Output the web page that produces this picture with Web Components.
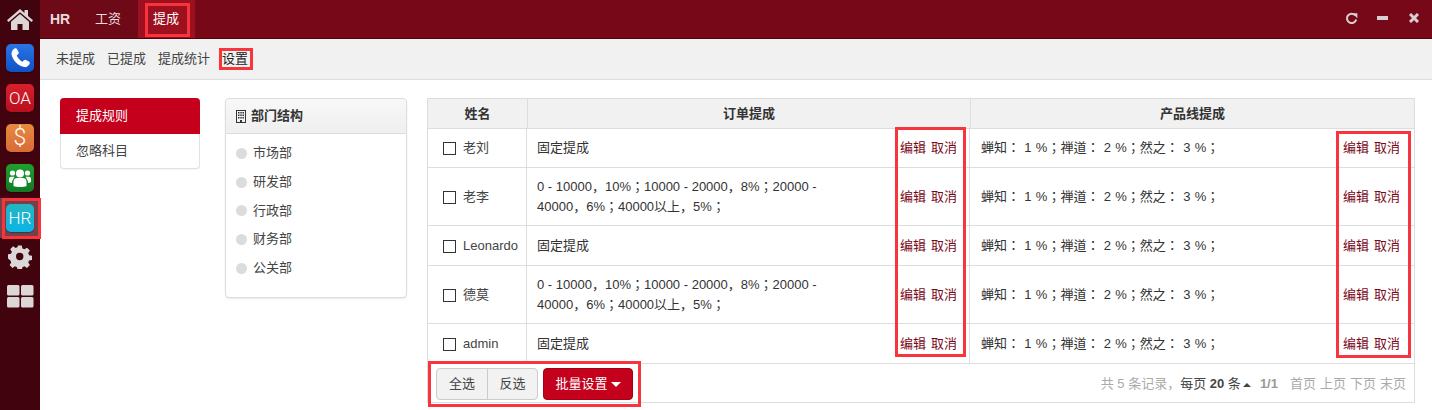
<!DOCTYPE html>
<html lang="zh-CN"><head><meta charset="utf-8"><title>HR</title>
<style>
html,body{margin:0;padding:0;height:410px;overflow:hidden;background:#fff}
body{font:13px/20px "Liberation Sans","Noto Sans CJK SC",sans-serif;color:#333;position:relative}
</style></head><body>
<x-app>
  <x-rail slot="rail"></x-rail>
  <x-topbar slot="top"></x-topbar>
  <x-subnav slot="sub"></x-subnav>
  <x-side-menu slot="main"></x-side-menu>
  <x-dept-panel slot="main"></x-dept-panel>
  <x-rule-table slot="main"></x-rule-table>
</x-app>
<x-mark style="left:145px;top:3px;width:45px;height:34px"></x-mark>
<x-mark style="left:219px;top:48px;width:34px;height:22px"></x-mark>
<x-mark style="left:2px;top:198px;width:39px;height:41px"></x-mark>
<x-mark style="left:895px;top:127px;width:71px;height:230px"></x-mark>
<x-mark style="left:1336px;top:131px;width:75px;height:227px"></x-mark>
<x-mark style="left:428px;top:361px;width:213px;height:46px"></x-mark>
<script>
const TC='"Liberation Sans","Noto Sans CJK KR",sans-serif';
const el=(name,css,html)=>customElements.define(name,class extends HTMLElement{
  constructor(){super();this.attachShadow({mode:'open'}).innerHTML='<style>'+css+'</style>'+html;}
});
el('x-app',`
  :host{display:grid;grid-template-columns:40px 1fr;grid-template-rows:39px 41px 1fr;width:1432px;height:410px}
  .rail{grid-row:1/4;display:flex}
  .top,.sub{display:flex;min-width:0}
  .main{display:flex;align-items:flex-start;padding:18px 17px 0 20px;gap:25px}
  ::slotted(x-rule-table){margin-left:-5px}
`,`<div class="rail"><slot name="rail"></slot></div><div class="top"><slot name="top"></slot></div><div class="sub"><slot name="sub"></slot></div><div class="main"><slot name="main"></slot></div>`);

const tile=(bg,inner)=>`<span class="tile" style="background:${bg}">${inner}</span>`;
el('x-rail',`
  :host{display:flex;flex-direction:column;align-items:center;width:40px;background:#41040f;color:#d9d2d4}
  .it{width:40px;height:40px;display:flex;align-items:center;justify-content:center;flex:none}
  .home{height:38px}
  .on{background:#74404c}
  .tile{width:28px;height:28px;border-radius:5px;display:flex;align-items:center;justify-content:center;color:#fff;font:300 17px/28px Roboto,"Liberation Sans",sans-serif;box-shadow:0 1px 1px rgba(0,0,0,.3)}
  svg{display:block}
`,`
  <div class="it home"><svg width="28" height="24" viewBox="0 0 28 24"><path fill="#ddd6d6" d="M14 2 1 13.2l1.5 1.8L14 5.2 25.500 15l1.500-1.800L22 8.900V3h-3.500v2.900z"/><path fill="#ddd6d6" d="M14 7 5 14.700V23h6.500v-6h5v6H23v-8.300z"/></svg></div>
  <div class="it">${tile('linear-gradient(#2a74e6,#0f52c4)','<svg width="22" height="22" viewBox="0 0 22 22"><path fill="#fff" d="M5.500 1.500c1-.6 2-.3 2.500.6l1.500 3c.4.800.2 1.600-.5 2.200L7.700 8.500c.8 2.300 3.500 5.300 5.800 6.200l1.300-1.400c.6-.6 1.400-.8 2.200-.4l2.900 1.600c.9.500 1.100 1.600.6 2.500-1.100 2-3 3.400-5 3.100C9.500 19.500 3 12.500 2.500 7c-.2-2.200 1.200-4.300 3-5.500z"/></svg>')}</div>
  <div class="it">${tile('linear-gradient(#d8202c,#b80f1f)','OA')}</div>
  <div class="it">${tile('linear-gradient(#e68a3e,#d96a38)','<span style="font-size:23px">$</span>')}</div>
  <div class="it">${tile('linear-gradient(#1fa02e,#107a24)','<svg width="24" height="22" viewBox="0 0 24 22"><g fill="#fff"><circle cx="12" cy="6.500" r="4"/><circle cx="4.500" cy="6" r="2.600"/><circle cx="19.500" cy="6" r="2.600"/><path d="M5.500 19v-4.500c0-2.500 2-3.500 3.500-3.500h6c1.500 0 3.500 1 3.500 3.500V19c-3 1.400-10 1.400-13 0z"/><path d="M1 15v-3c0-1.500 1-2.200 2.500-2.200h2.800L4 14.500V16c-1 0-2-.3-3-1zM23 15v-3c0-1.500-1-2.200-2.500-2.200h-2.800l2.300 4.700V16c1 0 2-.3 3-1z"/></g></svg>')}</div>
  <div class="it on">${tile('linear-gradient(#26b5bf,#0bb4e6)','HR')}</div>
  <div class="it"><svg width="24" height="24" viewBox="0 0 26 26" style="margin-top:-2px"><path fill="#ddd6d6" fill-rule="evenodd" d="M10.800 1h4.400l.7 3.300 2.200.9 2.800-1.800 3.100 3.100-1.800 2.800.9 2.200 3.300.7v4.400l-3.300.7-.9 2.200 1.800 2.800-3.100 3.100-2.800-1.800-2.200.9-.7 3.300h-4.400l-.7-3.300-2.200-.9-2.800 1.800-3.100-3.100 1.800-2.800-.9-2.200L.3 15v-4.400l3.300-.7.900-2.200L2.700 5 5.800 1.900l2.800 1.800 2.200-.9zM13 9a4 4 0 1 0 0 8 4 4 0 0 0 0-8z" transform="translate(-.3 -.5)"/></svg></div>
  <div class="it" style="height:36px"><svg width="27" height="23" viewBox="0 0 27 23"><g fill="#ddd6d6"><rect width="12.500" height="10.500" rx="1.500"/><rect x="14" width="12.500" height="10.500" rx="1.500"/><rect y="12" width="12.500" height="10.500" rx="1.500"/><rect x="14" y="12" width="12.500" height="10.500" rx="1.500"/></g></svg></div>
`);

el('x-topbar',`
  :host{display:flex;flex:1;align-items:stretch;background:#770818;border-bottom:1px solid #4d0410;box-sizing:border-box;height:39px;color:#e8dcdc}
  nav{display:flex;align-items:stretch;padding-left:10px;background:#6e0918;flex:none}
  a{display:flex;align-items:center;line-height:20px}
  .hr{font-weight:bold;width:45px;font-size:14px}
  .gz{width:43px}
  .on{background:#9c1020;color:#fff;padding:0 14px 0 15px;width:28px}
  .r{margin-left:auto;display:flex;align-items:center;padding:0 13px 2px 0}
  svg{display:block}
`,`<nav><a class="hr">HR</a><a class="gz">工资</a><a class="on">提成</a></nav>
<div class="r">
<svg width="13" height="13" viewBox="0 0 14 14" style="margin-right:0"><path fill="none" stroke="#d8d0d0" stroke-width="2.200" d="M10.800 3.500A5 5 0 1 0 12 8"/><path fill="#d8d0d0" d="M8 1h5.500v5.500z" transform="translate(-.2 .3)"/></svg>
<svg width="11" height="4" viewBox="0 0 11 4" style="margin-left:19px"><rect width="11" height="4" fill="#d8d0d0"/></svg>
<svg width="10" height="10" viewBox="0 0 10 10" style="margin-left:21px"><path stroke="#d8d0d0" stroke-width="3" d="M1 1l8 8m0-8l-8 8"/></svg>
</div>`);

el('x-subnav',`
  :host{display:flex;flex:1;align-items:center;gap:12px;background:#f1f1f1;border-bottom:1px solid #ddd;box-sizing:border-box;height:41px;padding:0 0 1px 16px;color:#444}
  a{line-height:20px}
  .on{color:#222}
`,`<a>未提成</a><a>已提成</a><a>提成统计</a><a class="on">设置</a>`);

el('x-side-menu',`
  :host{display:flex;flex-direction:column;width:140px;height:71px;box-sizing:border-box;border:1px solid #e2e2e2;border-top:0;border-radius:4px;flex:none;background:#fff;box-shadow:0 1px 1px rgba(0,0,0,.04)}
  a{display:block;height:35px;line-height:33px;padding-left:15px;color:#444}
  .on{background:#c4001c;color:#fff;margin:0 -1px;height:36px;line-height:36px;padding-left:16px;border-radius:4px 4px 0 0}
`,`<a class="on">提成规则</a><a>忽略科目</a>`);

el('x-dept-panel',`
  :host{display:block;width:182px;height:200px;box-sizing:border-box;border:1px solid #ddd;border-radius:4px;flex:none;background:#fff;box-shadow:0 1px 2px rgba(0,0,0,.08)}
  header{height:35px;box-sizing:border-box;background:linear-gradient(#f8f8f8,#efefef);border-bottom:1px solid #ddd;border-radius:4px 4px 0 0;display:flex;align-items:center;gap:5px;padding-left:10px;font-weight:bold;color:#333}
  ul{list-style:none;margin:0;padding:5px 0 0 10px}
  li{height:28.700px;display:flex;align-items:center;gap:6px;color:#444}
  i{width:11px;height:11px;border-radius:50%;background:#dcdcdc;flex:none}
  svg{display:block}
`,`<header><svg width="10" height="13" viewBox="0 0 10 13"><path fill="#333" fill-rule="evenodd" d="M0 0h10v13H0zM1 1v11h3v-2h2v2h3V1zM2 2h1.500v1.500H2zM4.300 2h1.500v1.500H4.300zM6.500 2H8v1.500H6.500zM2 4.500h1.500V6H2zM4.300 4.500h1.500V6H4.300zM6.500 4.500H8V6H6.500zM2 7h1.500v1.500H2zM4.300 7h1.500v1.500H4.300zM6.500 7H8v1.500H6.500z"/></svg><span>部门结构</span></header>
<ul><li><i></i>市场部</li><li><i></i>研发部</li><li><i></i>行政部</li><li><i></i>财务部</li><li><i></i>公关部</li></ul>`);

el('x-ops',`
  :host{display:inline-flex;gap:5px;color:#7a0819;white-space:nowrap}
`,`<a>编辑</a><a>取消</a>`);

customElements.define('x-rule-row',class extends HTMLElement{
  constructor(){
    super();
    const r=this.attachShadow({mode:'open'});
    r.innerHTML=`<style>
      :host{display:grid;grid-template-columns:99px 443px 1fr;border-bottom:1px solid #ddd;box-sizing:border-box}
      .c{display:flex;align-items:center;min-width:0;box-sizing:border-box}
      .n{padding-left:15px;gap:7px;border-right:1px solid #ddd}
      .n i{width:13px;height:13px;box-sizing:border-box;border:1px solid #333;flex:none;margin-top:1px}
      .o{padding-left:10px;justify-content:space-between;padding-right:12px;border-right:1px solid #ddd;line-height:20px}
      .o span{width:290px;color:#333;font-family:${TC}}
      .p{padding-left:11px;justify-content:space-between;padding-right:14px;color:#333}
      .p span{font-family:${TC};word-spacing:.7px}
      .l{color:#444}
    </style>
    <div class="c n"><i></i><span class="l"><slot name="name"></slot></span></div>
    <div class="c o"><span><slot name="rule"></slot></span><x-ops></x-ops></div>
    <div class="c p"><span lang="ko">蝉知： 1 %；禅道： 2 %；然之： 3 %；</span><x-ops></x-ops></div>`;
  }
});

el('x-pager',`
  :host{display:flex;align-items:center;height:39px;padding:0 8px;color:#aaa;font-size:13px}
  .g{display:flex;border:1px solid #ccc;border-radius:4px;background:#f2f2f2;color:#444;height:32px;box-sizing:border-box}
  .g a{width:50px;box-sizing:border-box;display:flex;align-items:center;justify-content:center}
  .g a+a{border-left:1px solid #ccc}
  .b{margin-left:5px;width:90px;height:32px;box-sizing:border-box;background:#c4001c;border:1px solid #a80018;border-radius:4px;color:#fff;display:flex;align-items:center;justify-content:center;gap:3px}
  .b i{width:0;height:0;border:5px solid transparent;border-top-color:#fff;border-bottom:0;margin-top:1px}
  .info{margin-left:auto;display:flex;align-items:center;white-space:nowrap}
  .t{font-family:${TC}}
  .info b{color:#444;font-weight:bold}
  .k{color:#444}
  .up{width:0;height:0;border:4px solid transparent;border-bottom-color:#444;border-top:0;margin:2px 0 0 2px}
  .pg{margin-left:9px;font-weight:bold;color:#999}
  .nav{margin-left:12px;word-spacing:.4px}
`,`<div class="g"><a>全选</a><a>反选</a></div><div class="b">批量设置<i></i></div>
<div class="info"><span class="t" lang="ko">共 5 条记录，</span><span class="k">每页 <b>20</b> 条</span><span class="up"></span><span class="pg">1/1</span><span class="nav">首页 上页 下页 末页</span></div>`);

el('x-rule-table',`
  :host{display:block;width:988px;height:305px;box-sizing:border-box;border:1px solid #ddd;flex:none;background:#fff}
  .h{display:grid;grid-template-columns:99px 443px 1fr;height:30px;background:#f1f1f1;border-bottom:1px solid #ddd;box-sizing:border-box;font-weight:bold;text-align:center;line-height:29px}
  .h div+div{border-left:1px solid #ddd}
`,`<div class="h"><div>姓名</div><div>订单提成</div><div>产品线提成</div></div><slot></slot><x-pager></x-pager>`);

const LONG='0 - 10000，10%；10000 - 20000，8%；20000 - 40000，6%；40000以上，5%；';
const rows=[['老刘','固定提成',39],['老李',LONG,58],['Leonardo','固定提成',40],['德莫',LONG,58],['admin','固定提成',40]];
const t=document.querySelector('x-rule-table');
for(const [n,rule,h] of rows){
  const r=document.createElement('x-rule-row');
  r.style.height=h+'px';
  const a=document.createElement('span');a.slot='name';a.textContent=n;
  const b=document.createElement('span');b.slot='rule';b.textContent=rule;b.lang='ko';
  r.append(a,b);t.append(r);
}
el('x-mark',`:host{position:absolute;display:block;box-sizing:border-box;border:3px solid #f8353d;pointer-events:none}`,'');
</script>
</body></html>
